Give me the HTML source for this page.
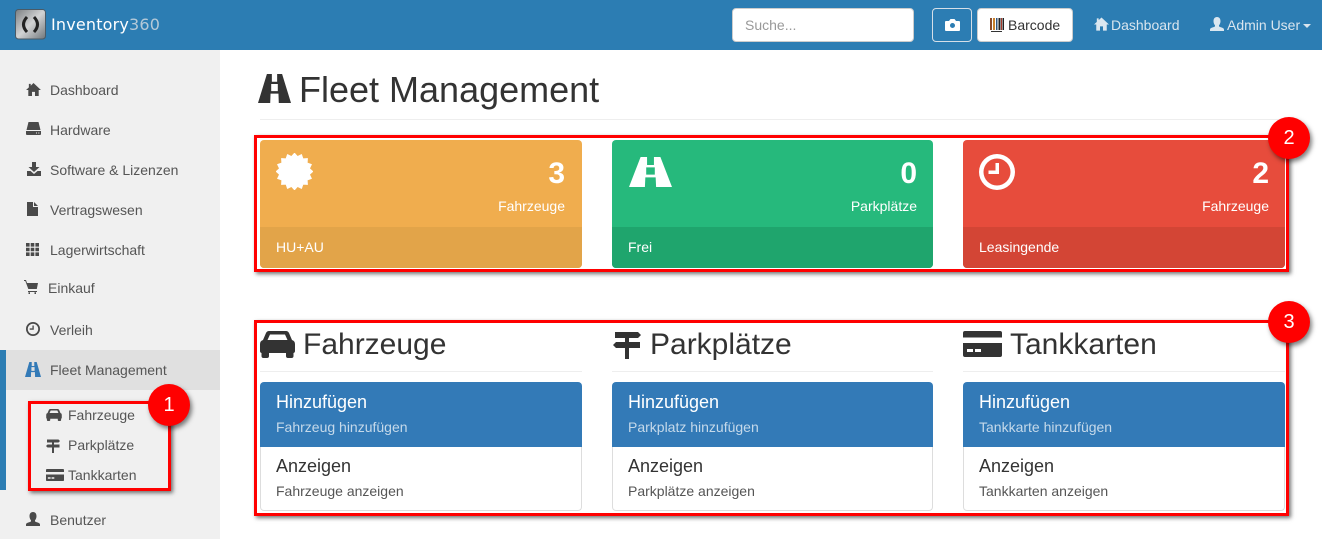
<!DOCTYPE html>
<html lang="de"><head><meta charset="utf-8"><title>Inventory360</title>
<style>
html,body{margin:0;padding:0;width:1322px;height:539px;overflow:hidden;background:#fff;font-family:"Liberation Sans",sans-serif;color:#333}
div,svg,span.a{position:absolute}
.t{position:absolute;white-space:nowrap;font-size:14px;line-height:20px;height:20px}
.s{color:#555}
.w{color:#fff}
.h2{font-size:30px;line-height:36px;height:36px;color:#333}
.h4{font-size:18px;line-height:22px;height:22px}
.box{border:3px solid #f00;box-shadow:2px 2px 4px rgba(0,0,0,.55);box-sizing:border-box}
.b{width:42px;height:42px;border-radius:50%;background:#f00;color:#fff;font-size:20px;line-height:42px;text-align:center;box-shadow:2px 3px 5px rgba(0,0,0,.5)}
.card{top:140px;height:128px;border-radius:4px;overflow:hidden}
.foot{left:0;right:0;top:87px;height:41px}
.hr{height:1px;background:#eee}
.blue{top:382px;height:65px;background:#337ab7;border-radius:4px 4px 0 0}
.white{top:447px;height:64px;background:#fff;border:1px solid #ddd;border-top:0;border-radius:0 0 4px 4px;box-sizing:border-box}
</style></head><body>
<svg width="0" height="0" style="left:0;top:0"><defs>
<symbol id="road" viewBox="0 0 100 90" preserveAspectRatio="none"><path fill-rule="evenodd" d="M27 0H73L100 90H0ZM42 0V24H58V0ZM40 31V53H60V31ZM38 61L37 90H63L62 61Z" fill="currentColor"/></symbol>
<symbol id="home" viewBox="0 0 16 14"><path d="M8 0L16 7.500H13.600V14H9.600V9.500H6.400V14H2.400V7.500H0L3 4.700V1H5V2.900Z" fill="currentColor"/></symbol>
<symbol id="hdd" viewBox="0 0 15 13"><path fill-rule="evenodd" d="M2.500 0H12.500L14.500 8H.5ZM0 9H15V12Q15 13 14 13H1Q0 13 0 12ZM10 10.500V11.500H11V10.500ZM12.300 10.500V11.500H13.300V10.500Z" fill="currentColor"/></symbol>
<symbol id="dl" viewBox="0 0 14 14"><path d="M5 0H9V5H12.500L7 10L1.500 5H5ZM0 9H3.500L7 12L10.500 9H14V14H0Z" fill="currentColor"/></symbol>
<symbol id="file" viewBox="0 0 11 14"><path d="M0 0H6V5H11V14H0ZM7 0L11 4H7Z" fill="currentColor"/></symbol>
<symbol id="grid" viewBox="0 0 13 13"><path d="M0 0H3.600V3.600H0ZM4.700 0H8.300V3.600H4.700ZM9.400 0H13V3.600H9.400ZM0 4.700H3.600V8.300H0ZM4.700 4.700H8.300V8.300H4.700ZM9.400 4.700H13V8.300H9.400ZM0 9.400H3.600V13H0ZM4.700 9.400H8.300V13H4.700ZM9.400 9.400H13V13H9.400Z" fill="currentColor"/></symbol>
<symbol id="cart" viewBox="0 0 14 14"><path d="M0 0H2L3 3H14L12.800 9H4.300L1.300 1H0ZM4 11H13V12H4ZM4.500 12.200H6V14H4.500ZM10.500 12.200H12V14H10.500Z" fill="currentColor"/></symbol>
<symbol id="clock" viewBox="0 0 36 36"><path fill-rule="evenodd" d="M18 0A18 18 0 1 1 18 36A18 18 0 1 1 18 0ZM18 4.500A13.500 13.500 0 1 0 18 31.500A13.500 13.500 0 1 0 18 4.500ZM16.500 9H20V20H9.500V16.500H16.500Z" fill="currentColor"/></symbol>
<symbol id="car" viewBox="0 0 35 27"><path fill-rule="evenodd" d="M9 0H26Q28 0 29 2L32 9Q35 10 35 13V20Q35 21.500 33.500 22V25Q33.500 27 31.500 27H28Q26 27 26 25V22H9V25Q9 27 7 27H3.500Q1.500 27 1.500 25V22Q0 21.500 0 20V13Q0 10 3 9L6 2Q7 0 9 0ZM10 3.500L7.500 9H27.500L25 3.500Z" fill="currentColor"/></symbol>
<symbol id="sign" viewBox="0 0 28 30"><path d="M2 3H25L28 6L25 9H16V13H27V19H16V30H12V19H3L0 16L3 13H12V9H2Z" fill="currentColor"/></symbol>
<symbol id="credit" viewBox="0 0 39 26"><path fill-rule="evenodd" d="M2 0H37Q39 0 39 2V6.500H0V2Q0 0 2 0ZM0 12H39V24Q39 26 37 26H2Q0 26 0 24ZM4 18V21H10V18ZM12 18V21H18V18Z" fill="currentColor"/></symbol>
<symbol id="cert" viewBox="0 0 36 36"><path stroke="currentColor" stroke-width=".6" stroke-linejoin="round" d="M18 0L20.930 3.290L24.890 1.370L26.330 5.530L30.730 5.270L30.470 9.670L34.630 11.110L32.710 15.070L36 18L32.710 20.930L34.630 24.890L30.470 26.330L30.730 30.730L26.330 30.470L24.890 34.630L20.930 32.710L18 36L15.070 32.710L11.110 34.630L9.670 30.470L5.270 30.730L5.530 26.330L1.370 24.890L3.290 20.930L0 18L3.290 15.070L1.370 11.110L5.530 9.670L5.270 5.270L9.670 5.530L11.110 1.370L15.070 3.290Z" fill="currentColor"/></symbol>
<symbol id="user" viewBox="0 0 14 14"><path d="M7 0C9.500 0 10.500 2 10.500 4.200C10.500 6 9.700 7.500 9 8.300V9.500C10.500 10.300 14 10.800 14 12.500V14H0V12.500C0 10.800 3.500 10.300 5 9.500V8.300C4.300 7.500 3.500 6 3.500 4.200C3.500 2 4.500 0 7 0Z" fill="currentColor"/></symbol>
<linearGradient id="metal" x1="0" y1="0" x2="1" y2="1"><stop offset="0" stop-color="#7a7e81"/><stop offset=".5" stop-color="#d2d3d4"/><stop offset="1" stop-color="#70767a"/></linearGradient>
</defs></svg>

<!-- navbar -->
<div style="left:0;top:0;width:1322px;height:50px;background:#2c7db3"></div>
<svg style="left:15px;top:9px" width="31" height="31" viewBox="0 0 31 31"><rect x=".5" y=".5" width="30" height="29.500" rx="3" fill="url(#metal)" stroke="#4a5a66"/><path d="M12 8Q5 15.500 12 23M19 8Q26 15.500 19 23" fill="none" stroke="#222" stroke-width="3"/></svg>
<div class="t" style="left:51px;top:14px;font-family:'DejaVu Sans',sans-serif;font-size:16px;letter-spacing:.18px;line-height:22px;height:22px;color:#fff">Inventory<span style="color:#b5c9d8">360</span></div>
<div style="left:732px;top:8px;width:182px;height:34px;background:#fff;border:1px solid #ccc;border-radius:4px;box-sizing:border-box"></div>
<div class="t" style="left:745px;top:15px;color:#999">Suche...</div>
<div style="left:932px;top:8px;width:40px;height:34px;border:1px solid #d5dfe8;border-radius:4px;box-sizing:border-box"></div>
<svg style="left:945px;top:19px" width="15" height="12" viewBox="0 0 15 12"><path fill-rule="evenodd" d="M1 2H4L5.500 0H9.500L11 2H14Q15 2 15 3V11Q15 12 14 12H1Q0 12 0 11V3Q0 2 1 2ZM7.500 4A2.500 2.500 0 1 0 7.500 9A2.500 2.500 0 1 0 7.500 4Z" fill="#fff"/></svg>
<div style="left:977px;top:8px;width:96px;height:34px;background:#fff;border:1px solid #ccc;border-radius:4px;box-sizing:border-box"></div>
<svg style="left:990px;top:18px" width="14" height="14" viewBox="0 0 14 14"><rect x="0" y="0" width="2" height="12" fill="#8a4b2a"/><rect x="3" y="0" width="2" height="12" fill="#c9812c"/><rect x="6" y="0" width="1.500" height="12" fill="#33577f"/><rect x="8.500" y="0" width="2" height="12" fill="#222"/><rect x="11" y="0" width="1" height="12" fill="#a63a2b"/><rect x="12.500" y="0" width="1.500" height="12" fill="#222"/><rect x="1" y="13" width="11" height="1" fill="#333"/></svg>
<div class="t" style="left:1008px;top:15px;color:#333">Barcode</div>
<svg style="left:1094px;top:17px;color:#dbe7f0" width="15" height="14"><use href="#home"/></svg>
<div class="t" style="left:1111px;top:15px;color:#d9e5ee">Dashboard</div>
<svg style="left:1210px;top:17px;color:#dbe7f0" width="14" height="14"><use href="#user"/></svg>
<div class="t" style="left:1227px;top:15px;color:#d9e5ee">Admin User</div>
<div style="left:1303px;top:24px;width:0;height:0;border-left:4px solid transparent;border-right:4px solid transparent;border-top:4px solid #d9e5ee"></div>

<!-- sidebar -->
<div style="left:0;top:50px;width:220px;height:489px;background:#f0f0f0"></div>
<div style="left:0;top:350px;width:6px;height:140px;background:#2c7db3"></div>
<div style="left:6px;top:350px;width:214px;height:40px;background:#e0e0e0"></div>

<svg style="left:26px;top:83px;color:#4a4a4a" width="15" height="13"><use href="#home"/></svg>
<div class="t s" style="left:50px;top:80px">Dashboard</div>
<svg style="left:26px;top:122px;color:#4a4a4a" width="15" height="13"><use href="#hdd"/></svg>
<div class="t s" style="left:50px;top:120px">Hardware</div>
<svg style="left:27px;top:162px;color:#4a4a4a" width="14" height="14"><use href="#dl"/></svg>
<div class="t s" style="left:50px;top:160px">Software &amp; Lizenzen</div>
<svg style="left:27px;top:202px;color:#4a4a4a" width="11" height="14"><use href="#file"/></svg>
<div class="t s" style="left:50px;top:200px">Vertragswesen</div>
<svg style="left:26px;top:243px;color:#4a4a4a" width="13" height="13"><use href="#grid"/></svg>
<div class="t s" style="left:50px;top:240px">Lagerwirtschaft</div>
<svg style="left:24px;top:280px;color:#4a4a4a" width="14" height="14"><use href="#cart"/></svg>
<div class="t s" style="left:48px;top:278px">Einkauf</div>
<svg style="left:26px;top:322px;color:#4a4a4a" width="14" height="14"><use href="#clock"/></svg>
<div class="t s" style="left:50px;top:320px">Verleih</div>
<svg style="left:25px;top:362px;color:#337ab7" width="16" height="15"><use href="#road"/></svg>
<div class="t s" style="left:50px;top:360px">Fleet Management</div>
<svg style="left:46px;top:409px;color:#4a4a4a" width="16" height="12"><use href="#car"/></svg>
<div class="t s" style="left:68px;top:405px">Fahrzeuge</div>
<svg style="left:46px;top:438px;color:#4a4a4a" width="14" height="15"><use href="#sign"/></svg>
<div class="t s" style="left:68px;top:435px">Parkplätze</div>
<svg style="left:46px;top:469px;color:#4a4a4a" width="18" height="12"><use href="#credit"/></svg>
<div class="t s" style="left:68px;top:465px">Tankkarten</div>
<svg style="left:26px;top:512px;color:#4a4a4a" width="14" height="14"><use href="#user"/></svg>
<div class="t s" style="left:50px;top:510px">Benutzer</div>

<!-- heading -->
<svg style="left:258px;top:74px;color:#333" width="33" height="29"><use href="#road"/></svg>
<div class="t" style="left:299px;top:70px;font-size:36px;line-height:40px;height:40px;color:#333">Fleet Management</div>
<div class="hr" style="left:260px;top:119px;width:1025px"></div>

<!-- cards -->
<div class="card" style="left:260px;width:322px;background:#f0ad4e"><div class="foot" style="background:#e2a449"></div></div>
<div class="card" style="left:612px;width:321px;background:#26b97c"><div class="foot" style="background:#1fa56d"></div></div>
<div class="card" style="left:963px;width:322px;background:#e74c3c"><div class="foot" style="background:#d34535"></div></div>

<svg style="left:276px;top:153px;color:#fff" width="37" height="37"><use href="#cert"/></svg>
<svg style="left:629px;top:157px;color:#fff" width="43" height="30"><use href="#road"/></svg>
<svg style="left:979px;top:154px;color:#fff" width="36" height="36"><use href="#clock"/></svg>

<div class="t w" style="right:757px;top:157px;font-size:30px;font-weight:bold;line-height:34px;height:34px">3</div>
<div class="t w" style="right:405px;top:157px;font-size:30px;font-weight:bold;line-height:34px;height:34px">0</div>
<div class="t w" style="right:53px;top:157px;font-size:30px;font-weight:bold;line-height:34px;height:34px">2</div>
<div class="t w" style="right:757px;top:196px">Fahrzeuge</div>
<div class="t w" style="right:405px;top:196px">Parkplätze</div>
<div class="t w" style="right:53px;top:196px">Fahrzeuge</div>
<div class="t w" style="left:276px;top:237px">HU+AU</div>
<div class="t w" style="left:628px;top:237px">Frei</div>
<div class="t w" style="left:979px;top:237px">Leasingende</div>

<!-- sections -->
<svg style="left:260px;top:331px;color:#333" width="35" height="27"><use href="#car"/></svg>
<div class="t h2" style="left:303px;top:327px">Fahrzeuge</div>
<svg style="left:613px;top:329px;color:#333" width="28" height="30"><use href="#sign"/></svg>
<div class="t h2" style="left:650px;top:327px">Parkplätze</div>
<svg style="left:963px;top:331px;color:#333" width="39" height="26"><use href="#credit"/></svg>
<div class="t h2" style="left:1010px;top:327px">Tankkarten</div>
<div class="hr" style="left:260px;top:371px;width:322px"></div>
<div class="hr" style="left:612px;top:371px;width:321px"></div>
<div class="hr" style="left:963px;top:371px;width:322px"></div>

<div class="blue" style="left:260px;width:322px"></div>
<div class="blue" style="left:612px;width:321px"></div>
<div class="blue" style="left:963px;width:322px"></div>
<div class="white" style="left:260px;width:322px"></div>
<div class="white" style="left:612px;width:321px"></div>
<div class="white" style="left:963px;width:322px"></div>

<div class="t h4 w" style="left:276px;top:391px">Hinzufügen</div>
<div class="t" style="left:276px;top:417px;color:#c5d9ea">Fahrzeug hinzufügen</div>
<div class="t h4" style="left:276px;top:455px">Anzeigen</div>
<div class="t s" style="left:276px;top:481px">Fahrzeuge anzeigen</div>

<div class="t h4 w" style="left:628px;top:391px">Hinzufügen</div>
<div class="t" style="left:628px;top:417px;color:#c5d9ea">Parkplatz hinzufügen</div>
<div class="t h4" style="left:628px;top:455px">Anzeigen</div>
<div class="t s" style="left:628px;top:481px">Parkplätze anzeigen</div>

<div class="t h4 w" style="left:979px;top:391px">Hinzufügen</div>
<div class="t" style="left:979px;top:417px;color:#c5d9ea">Tankkarte hinzufügen</div>
<div class="t h4" style="left:979px;top:455px">Anzeigen</div>
<div class="t s" style="left:979px;top:481px">Tankkarten anzeigen</div>

<!-- annotations -->
<div class="box" style="left:28px;top:401px;width:143px;height:90px"></div>
<div class="box" style="left:254px;top:135px;width:1035px;height:137px"></div>
<div class="box" style="left:254px;top:320px;width:1035px;height:196px"></div>
<div class="b" style="left:148px;top:384px">1</div>
<div class="b" style="left:1268px;top:117px">2</div>
<div class="b" style="left:1268px;top:301px">3</div>
</body></html>
